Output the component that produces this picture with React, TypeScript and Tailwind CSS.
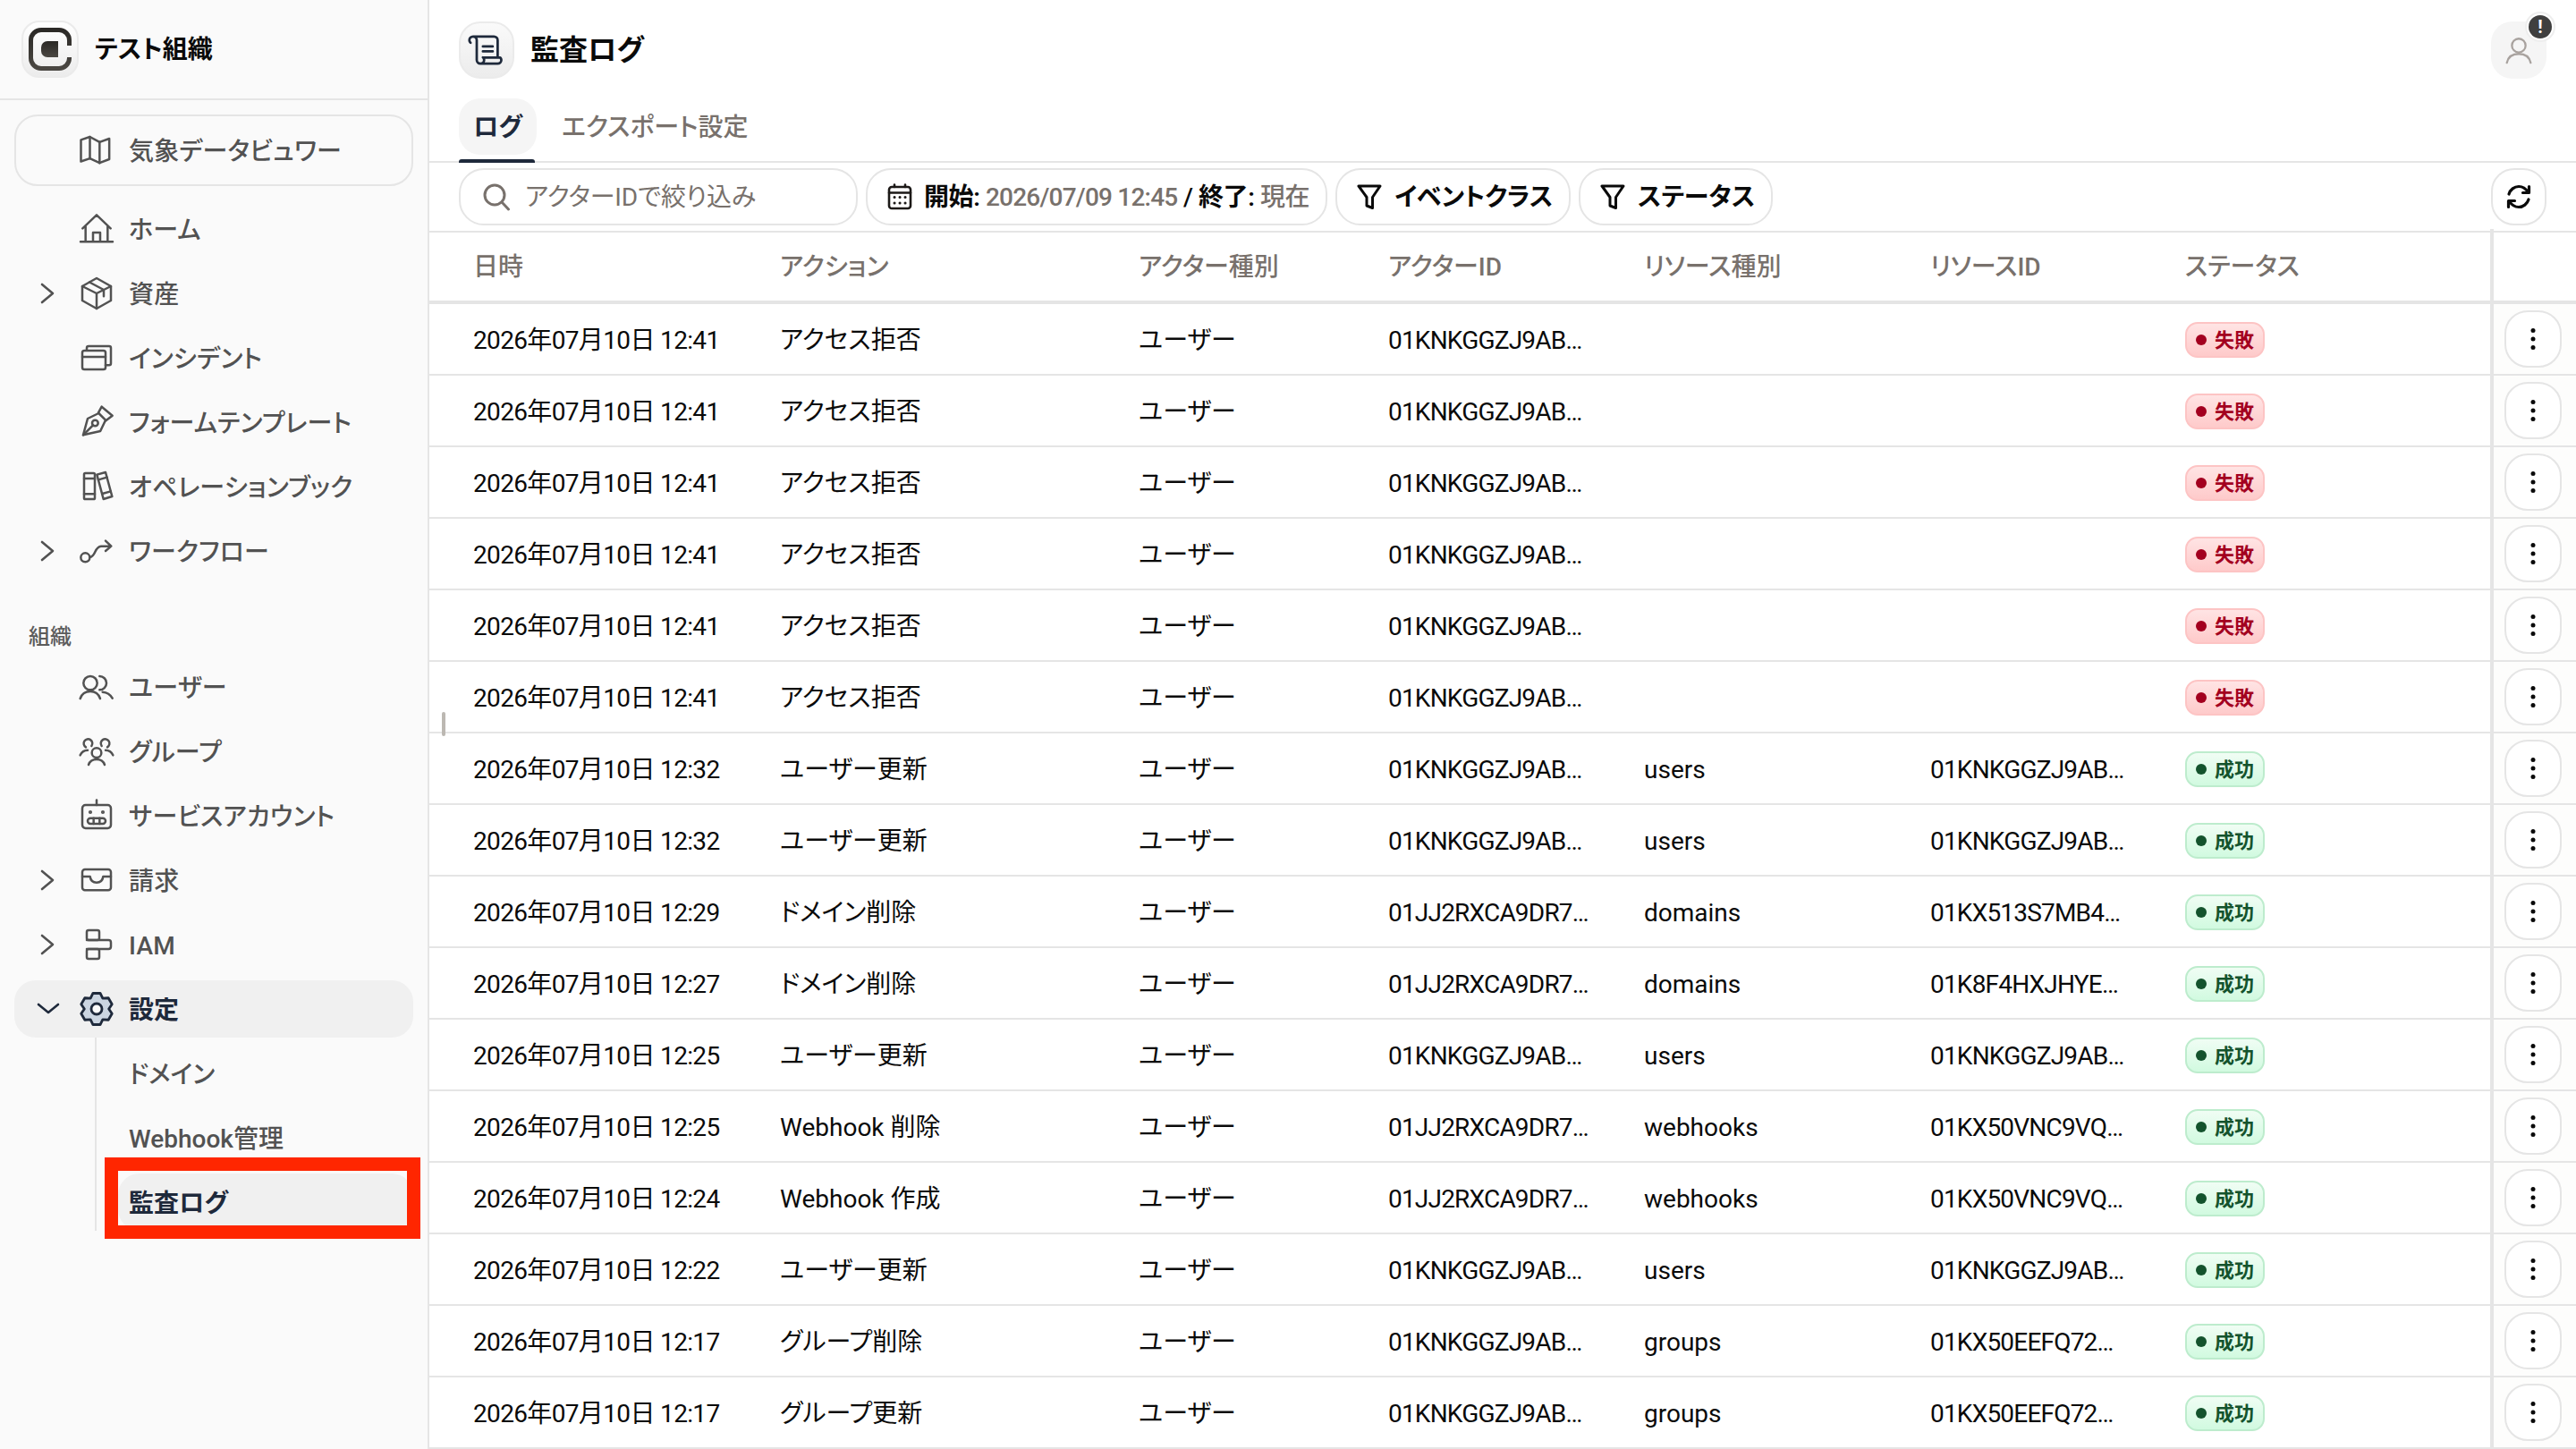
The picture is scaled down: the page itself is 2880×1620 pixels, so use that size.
import React from "react";
import { PiScroll } from "react-icons/pi";

type IconProps = { children: React.ReactNode; size?: number; className?: string; sw?: number };

function I({ children, size = 40, className = "", sw = 1.5 }: IconProps) {
  return (
    <svg
      width={size}
      height={size}
      viewBox="0 0 24 24"
      fill="none"
      stroke="currentColor"
      strokeWidth={sw}
      strokeLinecap="round"
      strokeLinejoin="round"
      className={"shrink-0 " + className}
    >
      {children}
    </svg>
  );
}

const MapI = () => (
  <I>
    <path d="M1.5 5 7.5 3 14 6.5 20.5 4.2V18L14 20.5 7.5 17.5 1.5 19.5Z" />
    <path d="M7.5 3V17.5M14 6.5V20.5" />
  </I>
);
const HomeI = () => (
  <I>
    <path d="M1.2 20.6H22.8M4.6 20.6V10.2M19.4 20.6V10.2M2.6 11.6 12 2.6 21.4 11.6M9.6 20.6V14.4H14.4V20.6" />
  </I>
);
const BoxI = () => (
  <I>
    <path d="M12 1.8 21.6 7.2V16.8L12 22.2 2.4 16.8V7.2Z" />
    <path d="M2.4 7.2 12 12 21.6 7.2M12 12V22.2M7.2 4.5 16.8 9.6V14" />
  </I>
);
const CardsI = () => (
  <I>
    <rect x="2.4" y="7.2" width="15.6" height="12.6" rx="1.4" />
    <path d="M2.4 11.4H18M5.4 7V5.4A1.2 1.2 0 0 1 6.6 4.2H20.4A1.2 1.2 0 0 1 21.6 5.4V15.8A1.2 1.2 0 0 1 20.4 17H18" />
  </I>
);
const NibI = () => (
  <I>
    <path d="M3 20.6 6 9.6 13.4 6 18 10.6 14.5 18Z" />
    <path d="M13.2 5.6 15.4 1.6 22.6 7.6 18.2 11M3 20.6 9.6 14" />
    <circle cx="11" cy="12.6" r="2" />
  </I>
);
const BooksI = () => (
  <I>
    <rect x="3.6" y="3" width="7.2" height="17.4" rx="0.8" />
    <path d="M3.6 6.6H10.8M3.6 17H10.8" />
    <path d="M12.2 4 18 2.4 22.4 18.6 16.6 20.4Z" />
    <path d="M13.2 7.4 19 5.8M15.8 16.8 21.4 15.2" />
  </I>
);
const PathI = () => (
  <I>
    <circle cx="4.4" cy="16.4" r="3" />
    <path d="M7.4 16.2C11.6 16 10.4 9 15 8.8H21.6M18 5.2 21.8 8.8 18 12" />
  </I>
);
const UsersI = () => (
  <I>
    <circle cx="7.8" cy="9.4" r="4.6" />
    <path d="M1 19.8C2 16.8 4.4 15 7.8 15S13.4 16.8 14.4 19.8" />
    <path d="M14 4.8A4.6 4.6 0 0 1 14 14M16 15.4C19 15.6 21.2 17 22.6 19.6" />
  </I>
);
const GroupI = () => (
  <I>
    <circle cx="12" cy="13" r="3.2" />
    <path d="M6.6 21C7.4 18.6 9.4 17.4 12 17.4S16.6 18.6 17.4 21" />
    <path d="M8.6 8.4A2.9 2.9 0 1 0 4.8 9.2M1 14.6C2 12.4 3.6 11.2 6 11.2" />
    <path d="M15.4 8.4A2.9 2.9 0 1 1 19.2 9.2M23 14.6C22 12.4 20.4 11.2 18 11.2" />
  </I>
);
const RobotI = () => (
  <I>
    <rect x="2.4" y="4.8" width="19.2" height="15.6" rx="2.2" />
    <path d="M12 1.5V4.8" />
    <rect x="6" y="13.6" width="12" height="3.8" rx="1.9" />
    <path d="M10 13.6V17.4M14 13.6V17.4" />
    <circle cx="7.8" cy="9.6" r="0.5" fill="currentColor" />
    <circle cx="16.2" cy="9.6" r="0.5" fill="currentColor" />
  </I>
);
const TrayI = () => (
  <I>
    <rect x="2.4" y="4.8" width="19.2" height="14" rx="1.8" />
    <path d="M2.4 9.6H7.6C8 12.4 9.6 13.6 12 13.6S16 12.4 16.4 9.6H21.6" />
  </I>
);
const IamI = () => (
  <I>
    <rect x="5.4" y="2.4" width="8.4" height="6.6" rx="1.2" />
    <rect x="5.4" y="15" width="8.4" height="6.6" rx="1.2" />
    <path d="M5.4 9H20A1.6 1.6 0 0 1 21.6 10.6V13.4A1.6 1.6 0 0 1 20 15H5.4" />
  </I>
);

function gearPath() {
  const pts: string[] = [];
  const p = (r: number, d: number) => {
    const a = (d * Math.PI) / 180;
    return `${(12 + r * Math.cos(a)).toFixed(2)} ${(12 + r * Math.sin(a)).toFixed(2)}`;
  };
  for (let i = 0; i < 6; i++) {
    const a = -90 + i * 60;
    pts.push((i === 0 ? "M" : "L") + p(8.2, a - 30));
    pts.push("L" + p(10.8, a - 13));
    pts.push("L" + p(10.8, a + 13));
  }
  return pts.join(" ") + " Z";
}
const GearI = () => (
  <I sw={1.7}>
    <path d={gearPath()} fill="#cbd5e1" />
    <circle cx="12" cy="12" r="3.6" fill="#fafafa" />
  </I>
);

const Chevron = ({ open }: { open?: boolean }) =>
  open ? (
    <svg width="32" height="32" viewBox="0 0 32 32" fill="none" stroke="#1e293b" strokeWidth="2.6" strokeLinecap="round" strokeLinejoin="round">
      <path d="M4 11 15 20 26 11" />
    </svg>
  ) : (
    <svg width="32" height="32" viewBox="0 0 32 32" fill="none" stroke="#525252" strokeWidth="2.6" strokeLinecap="round" strokeLinejoin="round">
      <path d="M8 6 20 16 8 26" />
    </svg>
  );

function NavRow({ icon, label, chevron }: { icon: React.ReactNode; label: string; chevron?: boolean }) {
  return (
    <div className="flex h-[64px] items-center pl-[22px] text-[#525252]">
      <span className="flex w-[34px] justify-center">{chevron && <Chevron />}</span>
      <span className="ml-[16px] mr-[16px]">{icon}</span>
      <span className="pt-[3px] text-[28px] font-medium tracking-[0.2px]">{label}</span>
    </div>
  );
}

const Logo = () => (
  <div className="flex h-[64px] w-[64px] shrink-0 items-center justify-center rounded-[20px] border-2 border-[#ebebeb] bg-gradient-to-b from-white to-[#ececec]">
    <svg width="48" height="48" viewBox="0 0 48 48" fill="none" className="shrink-0">
      <defs>
        <linearGradient id="lg" x1="0" y1="0" x2="0" y2="1">
          <stop offset="0" stopColor="#2b2926" />
          <stop offset="1" stopColor="#4a4742" />
        </linearGradient>
      </defs>
      <path d="M45.5 20V14A11.5 11.5 0 0 0 34 2.5H14A11.5 11.5 0 0 0 2.5 14V34A11.5 11.5 0 0 0 14 45.5H34A11.5 11.5 0 0 0 45.5 34V33" stroke="url(#lg)" strokeWidth="5" />
      <path d="M21 15H33V33H21A7 7 0 0 1 14 26V22A7 7 0 0 1 21 15Z" fill="url(#lg)" />
    </svg>
  </div>
);

function Badge({ ok }: { ok: boolean }) {
  return ok ? (
    <span className="inline-flex h-[40px] w-[89px] items-center gap-[9px] rounded-[14px] border-2 border-[#bdeccd] bg-gradient-to-b from-[#f0fdf4] to-[#d1fae0] pl-[10px] text-[22px] font-semibold text-[#14532d]">
      <span className="h-[12px] w-[12px] rounded-full bg-[#14532d]" />
      成功
    </span>
  ) : (
    <span className="inline-flex h-[40px] w-[89px] items-center gap-[9px] rounded-[14px] border-2 border-[#fdc4c4] bg-gradient-to-b from-[#ffe4e4] to-[#fecaca] pl-[10px] text-[22px] font-semibold text-[#a3001f]">
      <span className="h-[12px] w-[12px] rounded-full bg-[#a3001f]" />
      失敗
    </span>
  );
}

const Kebab = () => (
  <button className="flex h-[64px] w-[64px] items-center justify-center rounded-[26px] border-2 border-[#e5e5e5] bg-white">
    <svg width="8" height="28" viewBox="0 0 8 28" fill="#0a0a0a">
      <circle cx="4" cy="4.5" r="2.5" />
      <circle cx="4" cy="14" r="2.5" />
      <circle cx="4" cy="23.5" r="2.5" />
    </svg>
  </button>
);

const FunnelI = () => (
  <svg width="28" height="30" viewBox="0 0 28 30" fill="none" stroke="#0a0a0a" strokeWidth="3" strokeLinecap="round" strokeLinejoin="round" className="shrink-0">
    <path d="M2 3H26L17.5 15.5V27.5L11 25V15.5Z" />
  </svg>
);

const K = "01KNKGGZJ9AB…";
const J = "01JJ2RXCA9DR7…";
const rows: [string, string, string, string, string, boolean][] = [
  ...Array.from({ length: 6 }, (): [string, string, string, string, string, boolean] => ["12:41", "アクセス拒否", K, "", "", false]),
  ["12:32", "ユーザー更新", K, "users", K, true],
  ["12:32", "ユーザー更新", K, "users", K, true],
  ["12:29", "ドメイン削除", J, "domains", "01KX513S7MB4…", true],
  ["12:27", "ドメイン削除", J, "domains", "01K8F4HXJHYE…", true],
  ["12:25", "ユーザー更新", K, "users", K, true],
  ["12:25", "Webhook 削除", J, "webhooks", "01KX50VNC9VQ…", true],
  ["12:24", "Webhook 作成", J, "webhooks", "01KX50VNC9VQ…", true],
  ["12:22", "ユーザー更新", K, "users", K, true],
  ["12:17", "グループ削除", K, "groups", "01KX50EEFQ72…", true],
  ["12:17", "グループ更新", K, "groups", "01KX50EEFQ72…", true],
];

export default function App() {
  return (
    <div className="flex h-[1620px] w-[2880px] overflow-hidden bg-white font-['Roboto','Noto_Sans_CJK_JP',sans-serif] [font-feature-settings:'palt'] text-[#0a0a0a]">
      <aside className="w-[480px] shrink-0 border-r-2 border-[#e5e5e5] bg-[#fafafa]">
        <div className="flex h-[112px] items-center gap-[18px] border-b-2 border-[#e5e5e5] pl-[24px]">
          <Logo />
          <span className="pt-[2px] text-[28px] font-semibold">テスト組織</span>
        </div>
        <nav className="flex flex-col gap-[8px] px-[16px] pt-[16px]">
          <div className="mb-[8px] flex h-[80px] items-center rounded-[26px] border-2 border-[#e5e5e5] pl-[70px] text-[#525252]">
            <span className="mr-[16px]"><MapI /></span>
            <span className="pt-[3px] text-[28px] font-medium tracking-[0.2px]">気象データビュワー</span>
          </div>
          <NavRow icon={<HomeI />} label="ホーム" />
          <NavRow icon={<BoxI />} label="資産" chevron />
          <NavRow icon={<CardsI />} label="インシデント" />
          <NavRow icon={<NibI />} label="フォームテンプレート" />
          <NavRow icon={<BooksI />} label="オペレーションブック" />
          <NavRow icon={<PathI />} label="ワークフロー" chevron />
          <div className="flex h-[72px] items-end pl-[16px]">
            <span className="text-[24px] leading-[32px] font-medium text-[#5c5c5c]">組織</span>
          </div>
          <NavRow icon={<UsersI />} label="ユーザー" />
          <NavRow icon={<GroupI />} label="グループ" />
          <NavRow icon={<RobotI />} label="サービスアカウント" />
          <NavRow icon={<TrayI />} label="請求" chevron />
          <NavRow icon={<IamI />} label="IAM" chevron />
          <div>
            <div className="flex h-[64px] items-center rounded-[24px] bg-[#f0f0f0] pl-[22px] text-[#1e293b]">
              <span className="flex w-[34px] justify-center"><Chevron open /></span>
              <span className="ml-[16px] mr-[16px]"><GearI /></span>
              <span className="pt-[3px] text-[28px] font-semibold">設定</span>
            </div>
            <div className="ml-[90px] flex flex-col gap-[8px] border-l-2 border-[#e5e5e5] pt-[8px] pl-[24px]">
              <div className="flex h-[64px] items-center pt-[3px] pl-[12px] text-[28px] font-medium text-[#525252]">ドメイン</div>
              <div className="flex h-[64px] items-center pt-[3px] pl-[12px] text-[28px] font-medium text-[#525252]">Webhook管理</div>
              <div className="relative flex h-[64px] items-center rounded-[24px] bg-[#f0f0f0] pt-[3px] pl-[12px] text-[28px] font-semibold text-[#1e293b]">
                監査ログ
                <span className="absolute -top-[18px] -right-[8px] -bottom-[9px] -left-[15px] border-[15px] border-[#ff2600]" />
              </div>
            </div>
          </div>
        </nav>
      </aside>

      <main className="relative flex min-w-0 flex-1 flex-col">
        <div className="flex h-[110px] items-start justify-between pt-[24px] pr-[33px] pl-[33px]">
          <div className="flex items-center gap-[18px]">
            <div className="flex h-[64px] w-[62px] items-center justify-center rounded-[24px] border-2 border-[#ebebeb] bg-gradient-to-b from-[#fafafa] to-[#ececec] text-[#1e293b]">
              <PiScroll size={44} />
            </div>
            <span className="text-[32px] font-semibold">監査ログ</span>
          </div>
          <div className="relative flex h-[64px] w-[62px] items-center justify-center rounded-[24px] bg-[#f5f5f5] text-[#a8a29e]">
            <I size={34} sw={1.6}>
              <circle cx="12" cy="8.4" r="5.4" />
              <path d="M2.6 22C3.6 17.6 7 15 12 15S20.4 17.6 21.4 22" />
            </I>
            <span className="absolute -top-[11px] -right-[10px] flex h-[34px] w-[34px] items-center justify-center rounded-full border-2 border-[#eeeeee] bg-white">
              <span className="flex h-[26px] w-[26px] items-center justify-center rounded-full bg-[#3f3f3f] text-[20px] leading-none font-bold text-white">!</span>
            </span>
          </div>
        </div>

        <div className="flex h-[72px] items-start gap-[28px] border-b-2 border-[#e5e5e5] pl-[33px]">
          <div className="relative flex h-[63px] w-[87px] items-center justify-center rounded-[24px] bg-[#f5f5f5] pt-[2px] text-[28px] font-semibold text-[#1e293b]">
            ログ
            <span className="absolute -bottom-[9px] left-0 h-[4px] w-[85px] rounded-t-[3px] bg-[#1e293b]" />
          </div>
          <div className="flex h-[63px] items-center pt-[2px] text-[28px] font-medium text-[#78716c]">エクスポート設定</div>
        </div>

        <div className="flex h-[78px] items-start justify-between border-b-2 border-[#e5e5e5] pt-[6px] pr-[33px] pl-[33px]">
          <div className="flex gap-[9px]">
            <div className="flex h-[64px] w-[446px] items-center gap-[16px] rounded-[28px] border-2 border-[#e5e5e5] pl-[24px] text-[28px] text-[#78716c]">
              <svg width="32" height="32" viewBox="0 0 32 32" fill="none" stroke="#78716c" strokeWidth="3" strokeLinecap="round" className="shrink-0">
                <circle cx="14" cy="14" r="11" />
                <path d="M22.5 22.5 29.5 30" />
              </svg>
              <span className="pt-[2px] tracking-[-0.1px]">アクターIDで絞り込み</span>
            </div>
            <div className="flex h-[64px] items-center gap-[13px] rounded-[28px] border-2 border-[#e5e5e5] pr-[18px] pl-[22px] text-[28px] font-medium">
              <svg width="28" height="30" viewBox="0 0 28 30" fill="none" stroke="#1c1917" strokeWidth="2.6" strokeLinecap="round" className="shrink-0">
                <rect x="2" y="4" width="24" height="24" rx="3" />
                <path d="M2 10.5H26M8 1.5V4M20 1.5V4" />
                <path d="M8 15.5H8.1M14 15.5H14.1M20 15.5H20.1M8 22H8.1M14 22H14.1M20 22H20.1" strokeWidth="3" />
              </svg>
              <span className="whitespace-pre pt-[2px] tracking-[-0.4px]">
                <span className="font-semibold">開始:</span> <span className="tracking-[-0.8px] text-[#78716c]">2026/07/09 12:45</span> / <span className="font-semibold">終了:</span> <span className="text-[#78716c]">現在</span>
              </span>
            </div>
            <div className="flex h-[64px] items-center gap-[14px] rounded-[28px] border-2 border-[#e5e5e5] pr-[18px] pl-[22px] text-[28px] font-semibold">
              <FunnelI />
              <span className="pt-[2px] tracking-[-0.2px]">イベントクラス</span>
            </div>
            <div className="flex h-[64px] items-center gap-[14px] rounded-[28px] border-2 border-[#e5e5e5] pr-[18px] pl-[22px] text-[28px] font-semibold">
              <FunnelI />
              <span className="pt-[2px]">ステータス</span>
            </div>
          </div>
          <button className="flex h-[64px] w-[62px] items-center justify-center rounded-[26px] border-2 border-[#e5e5e5]">
            <svg width="30" height="30" viewBox="0 0 30 30" fill="none" stroke="#0a0a0a" strokeWidth="3.2" strokeLinecap="round" strokeLinejoin="round">
              <path d="M4 12C5.5 7 10 3.5 15 3.5 19.5 3.5 23 6 25.5 10M26.5 3.5V10.5H19.5" />
              <path d="M26 18C24.5 23 20 26.5 15 26.5 10.5 26.5 7 24 4.5 20M3.5 26.5V19.5H10.5" />
            </svg>
          </button>
        </div>

        <div className="grid h-[80px] grid-cols-[343px_401px_279px_286px_320px_285px_341px_96px] border-b-4 border-[#e5e5e5] pl-[49px] text-[28px] font-medium text-[#78716c]">
          {["日時", "アクション", "アクター種別", "アクターID", "リソース種別", "リソースID", "ステータス"].map((h) => (
            <div key={h} className="flex items-center pt-[2px]">{h}</div>
          ))}
          <div className="-mt-[4px] border-l-4 border-[#e5e5e5]" />
        </div>

        {rows.map((r, i) => (
          <div key={i} className="grid h-[80px] shrink-0 grid-cols-[343px_401px_279px_286px_320px_285px_341px_96px] border-b-2 border-[#e5e5e5] pl-[49px] text-[28px]">
            <div className="flex items-center pt-[4px] tracking-[-0.65px]">2026年07月10日 {r[0]}</div>
            <div className="flex items-center pt-[4px]">{r[1]}</div>
            <div className="flex items-center pt-[4px]">ユーザー</div>
            <div className="flex items-center pt-[4px] tracking-[-0.8px]">{r[2]}</div>
            <div className="flex items-center pt-[4px]">{r[3]}</div>
            <div className="flex items-center pt-[4px] tracking-[-0.8px]">{r[4]}</div>
            <div className="flex items-center pt-[2px]"><Badge ok={r[5]} /></div>
            <div className="flex items-center border-l-4 border-[#e5e5e5] bg-[#fdfdfc] pl-[12px]"><Kebab /></div>
          </div>
        ))}

        <span className="absolute top-[796px] left-[14px] h-[27px] w-[4px] rounded-full bg-[#bcb8b2]" />
      </main>
    </div>
  );
}
